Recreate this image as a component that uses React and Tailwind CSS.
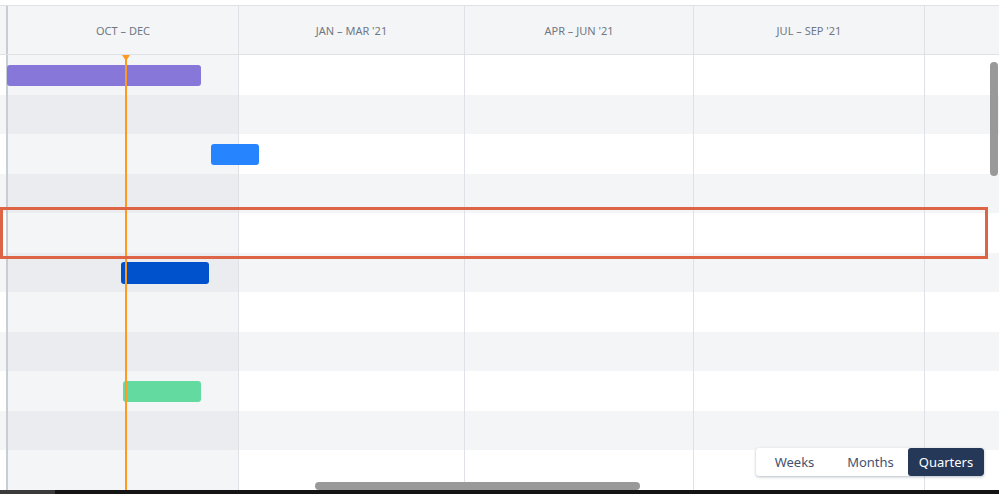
import React from "react";

const rows = Array.from({ length: 12 }, (_, i) => i);

const bars = [
  { row: 0, left: 7, width: 194, color: "bg-[#8777d9]" },
  { row: 2, left: 211, width: 48, color: "bg-[#2684ff]" },
  { row: 5, left: 121, width: 88, color: "bg-[#0052cc]" },
  { row: 8, left: 123, width: 78, color: "bg-[#63daa0]" },
];

function Row({ index }) {
  const odd = index % 2 === 1;
  const base = odd ? "bg-[#f4f5f7]" : "bg-white";
  const hi = odd ? "bg-[#ebecf0]" : "bg-[#f4f5f7]";
  const bar = bars.find((b) => b.row === index);
  return (
    <div className={`relative flex h-[39.5px] shrink-0 ${base}`}>
      <div className="w-[6px] shrink-0" />
      <div className="w-[2px] shrink-0 bg-[#c8ccd3]" />
      <div className={`w-[230px] shrink-0 ${hi}`} />
      <div className="w-[226px] shrink-0 border-l border-[#dfe1e6]" />
      <div className="w-[229px] shrink-0 border-l border-[#dfe1e6]" />
      <div className="w-[231px] shrink-0 border-l border-[#dfe1e6]" />
      <div className="flex-1 border-l border-[#dfe1e6]" />
      {bar && (
        <div
          className={`absolute top-[9.5px] h-[21.5px] rounded-[3px] ${bar.color}`}
          style={{ left: bar.left, width: bar.width }}
        />
      )}
    </div>
  );
}

export default function App() {
  return (
    <div
      className="relative flex h-[494px] w-[999px] flex-col overflow-hidden bg-white"
      style={{ fontFamily: '"Noto Sans", "Open Sans", sans-serif' }}
    >
      <div className="h-[5px] shrink-0 bg-white" />
      <div className="flex h-[50px] shrink-0 border-y border-[#dfe1e6] bg-[#f4f5f7] pt-[2px] text-[11px] text-[#707784]">
        <div className="w-[6px] shrink-0 bg-[#f4f5f7]" />
        <div className="-mt-[2px] w-[2px] shrink-0 bg-[#c8ccd3]" />
        <div className="flex w-[230px] shrink-0 items-center justify-center">OCT – DEC</div>
        <div className="-mt-[2px] flex w-[226px] shrink-0 items-center justify-center border-l border-[#dfe1e6] pt-[2px]">JAN – MAR '21</div>
        <div className="-mt-[2px] flex w-[229px] shrink-0 items-center justify-center border-l border-[#dfe1e6] pt-[2px]">APR – JUN '21</div>
        <div className="-mt-[2px] flex w-[231px] shrink-0 items-center justify-center border-l border-[#dfe1e6] pt-[2px]">JUL – SEP '21</div>
        <div className="-mt-[2px] flex-1 border-l border-[#dfe1e6]" />
      </div>
      <div className="flex flex-1 flex-col overflow-hidden">
        {rows.map((i) => (
          <Row key={i} index={i} />
        ))}
      </div>
      <div className="flex h-[4px] shrink-0">
        <div className="w-[55px] bg-[#3a3a3a]" />
        <div className="flex-1 bg-[#141414]" />
      </div>

      {/* today line */}
      <div className="absolute left-[125px] top-[55px] bottom-[4px] w-[2px] bg-[#ff991f]" />
      <div className="absolute left-[122px] top-[55px] h-0 w-0 border-x-[4px] border-t-[6px] border-x-transparent border-t-[#ff991f]" />

      {/* highlight annotation */}
      <div className="absolute left-0 top-[207px] h-[52px] w-[988px] border-[3px] border-[#dd6445]" />

      {/* scrollbars */}
      <div className="absolute left-[990px] top-[62px] h-[114px] w-[8px] rounded-full bg-[#999999]" />
      <div className="absolute left-[315px] top-[482px] h-[8px] w-[325px] rounded-full bg-[#999999]" />

      {/* zoom switch */}
      <div className="absolute left-[756px] top-[448px] flex h-[28px] overflow-hidden rounded-[3px] bg-white text-[13px] text-[#42526e] shadow-[0_1px_3px_rgba(9,30,66,0.3)]">
        <div className="flex w-[77px] items-center justify-center pt-[2px]">Weeks</div>
        <div className="flex w-[75px] items-center justify-center pt-[2px]">Months</div>
        <div className="flex w-[76px] items-center justify-center rounded-[3px] bg-[#253858] pt-[2px] text-white">Quarters</div>
      </div>
    </div>
  );
}
